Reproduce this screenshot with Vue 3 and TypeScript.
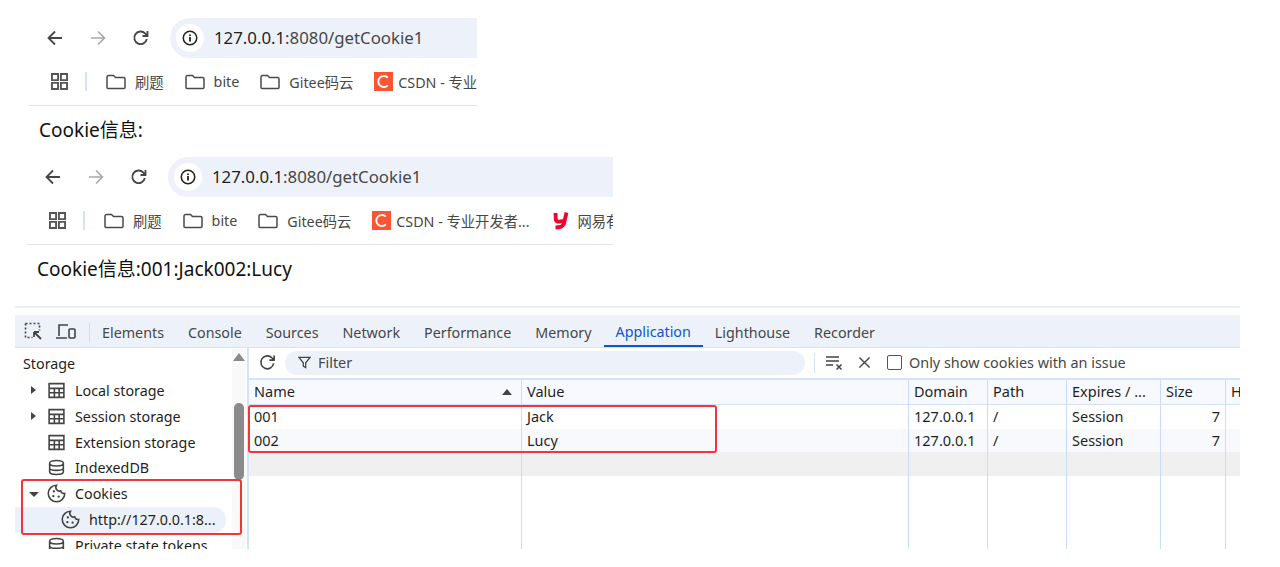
<script setup lang="ts">
interface Bookmark { label: string; kind: 'folder' | 'csdn' | 'y' }
const first: Bookmark[] = [
  { label: '刷题', kind: 'folder' },
  { label: 'bite', kind: 'folder' },
  { label: 'Gitee码云', kind: 'folder' },
  { label: 'CSDN - 专业开发者...', kind: 'csdn' }
]
const second: Bookmark[] = [...first, { label: '网易有道翻译', kind: 'y' }]
const shots = [
  { cls: 'one', marks: first, text: 'Cookie信息:' },
  { cls: 'two', marks: second, text: 'Cookie信息:001:Jack002:Lucy' }
]
const tabs = ['Elements', 'Console', 'Sources', 'Network', 'Performance', 'Memory', 'Application', 'Lighthouse', 'Recorder']
const tree = [
  { label: 'Local storage', arrow: 'right', icon: 'table' },
  { label: 'Session storage', arrow: 'right', icon: 'table' },
  { label: 'Extension storage', arrow: '', icon: 'table' },
  { label: 'IndexedDB', arrow: '', icon: 'db' },
  { label: 'Cookies', arrow: 'down', icon: 'cookie' }
]
const cols = ['Name', 'Value', 'Domain', 'Path', 'Expires / ...', 'Size', 'H']
const rows = [
  ['001', 'Jack', '127.0.0.1', '/', 'Session', '7', ''],
  ['002', 'Lucy', '127.0.0.1', '/', 'Session', '7', '']
]
</script>

<template>
  <div class="page">
    <section v-for="s in shots" :key="s.cls" class="shot" :class="s.cls">
      <div class="nav">
        <svg class="nav-ic" viewBox="0 0 20 20"><path d="M17 10H4M10 3.5 3.5 10l6.5 6.5" fill="none" stroke="#474747" stroke-width="1.8" /></svg>
        <svg class="nav-ic" viewBox="0 0 20 20"><path d="M3 10h13M10 3.500 16.500 10 10 16.500" fill="none" stroke="#a8a8a8" stroke-width="1.600" /></svg>
        <svg class="nav-ic" viewBox="0 0 20 20"><path d="M15.800 11a6.300 6.300 0 1 1-1.500-5.400L16.500 8M16.500 3v5h-5" fill="none" stroke="#474747" stroke-width="1.800" /></svg>
        <div class="url">
          <span class="info"><svg viewBox="0 0 20 20" width="18" height="18"><circle cx="10" cy="10" r="7.500" fill="none" stroke="#222" stroke-width="1.700" /><path d="M10 9v5M10 6v1.800" stroke="#222" stroke-width="2" /></svg></span>
          <span class="addr">127.0.0.1<span class="dim">:8080/getCookie1</span></span>
        </div>
      </div>
      <div class="marks">
        <svg class="apps" viewBox="0 0 18 18"><path d="M1 1h6.500v6.500H1zM10.500 1H17v6.500h-6.500zM1 10.500h6.500V17H1zM10.500 10.500H17V17h-6.500z" fill="none" stroke="#555" stroke-width="2" /></svg>
        <i class="sep"></i>
        <span v-for="m in s.marks" :key="m.label" class="mark">
          <svg v-if="m.kind === 'folder'" class="folder" viewBox="0 0 20 16"><path d="M1 3a1.500 1.500 0 0 1 1.500-1.500h5L9.500 3.500h8A1.500 1.500 0 0 1 19 5v8.500a1 1 0 0 1-1 1H2a1 1 0 0 1-1-1z" fill="none" stroke="#4a4a4a" stroke-width="1.500" /></svg>
          <span v-else-if="m.kind === 'csdn'" class="csdn"><svg viewBox="0 0 19 19" width="19" height="19"><path d="M13.800 5.600A5.200 5.200 0 0 0 9.800 4 5.500 5.500 0 0 0 9.800 15a5.200 5.200 0 0 0 4-1.600" fill="none" stroke="#fff" stroke-width="1.900" /></svg></span>
          <svg v-else class="yd" viewBox="0 0 18 19"><path d="M3.500 2 3.800 8.500Q4 11 7.500 10.600L12 10M14.500 1.500 12 12.500Q11 16.500 3.500 16.500" fill="none" stroke="#f5002b" stroke-width="3.800" /></svg>
          <span class="mark-text">{{ m.label }}</span>
        </span>
      </div>
      <p class="msg">{{ s.text }}</p>
    </section>

    <section class="devtools">
      <div class="tabs">
        <svg class="tool" viewBox="0 0 20 20"><path d="M1.500 1.500h14v7M1.500 1.500v14h7" fill="none" stroke="#444" stroke-width="1.600" stroke-dasharray="2 2" /><path d="M10 10l7 7M10 10h5M10 10v5" fill="none" stroke="#444" stroke-width="1.800" /></svg>
        <svg class="tool" viewBox="0 0 20 20"><path d="M3 14V3h9M0 16h11" fill="none" stroke="#444" stroke-width="1.600" /><rect x="13" y="7" width="6" height="9" rx="1" fill="none" stroke="#444" stroke-width="1.600" /></svg>
        <i class="tsep"></i>
        <span v-for="t in tabs" :key="t" class="tab" :class="{ on: t === 'Application' }">{{ t }}</span>
      </div>
      <div class="body">
        <aside class="side">
          <div class="side-title">Storage</div>
          <div v-for="n in tree" :key="n.label" class="node">
            <span class="arrow" :class="n.arrow"></span>
            <svg v-if="n.icon === 'table'" class="ic" viewBox="0 0 18 18"><path d="M2 2.500h14v13H2zM2 7h14M2 11.200h14M7 7v8.500M11.500 7v8.500" fill="none" stroke="#444" stroke-width="1.500" /></svg>
            <svg v-else-if="n.icon === 'db'" class="ic" viewBox="0 0 18 18"><path d="M2.500 5c0-3.500 13-3.500 13 0v8c0 3.500-13 3.500-13 0zM2.500 5c0 3.500 13 3.500 13 0M2.500 9.500c0 3 13 3 13 0" fill="none" stroke="#444" stroke-width="1.500" /></svg>
            <svg v-else class="ic" viewBox="0 0 18 18"><path d="M9 1.200a7.800 7.800 0 1 0 7.800 7.800 3.400 3.400 0 0 1-3.800-2.500A3.500 3.500 0 0 1 9 1.200z" fill="none" stroke="#444" stroke-width="1.500" /><circle cx="6.500" cy="7" r="1.100" fill="#444" /><circle cx="6" cy="11.500" r="1.100" fill="#444" /><circle cx="11" cy="12" r="1.100" fill="#444" /></svg>
            <span>{{ n.label }}</span>
          </div>
          <div class="node sel">
            <svg class="ic" viewBox="0 0 18 18"><path d="M9 1.200a7.800 7.800 0 1 0 7.800 7.800 3.400 3.400 0 0 1-3.800-2.500A3.500 3.500 0 0 1 9 1.200z" fill="none" stroke="#444" stroke-width="1.500" /><circle cx="6.500" cy="7" r="1.100" fill="#444" /><circle cx="6" cy="11.500" r="1.100" fill="#444" /><circle cx="11" cy="12" r="1.100" fill="#444" /></svg>
            <span>http://127.0.0.1:8...</span>
          </div>
          <div class="node">
            <span class="arrow"></span>
            <svg class="ic" viewBox="0 0 18 18"><path d="M2.500 5c0-3.500 13-3.500 13 0v8c0 3.500-13 3.500-13 0zM2.500 5c0 3.500 13 3.500 13 0M2.500 9.500c0 3 13 3 13 0" fill="none" stroke="#444" stroke-width="1.500" /></svg>
            <span>Private state tokens</span>
          </div>
          <div class="scroll"><i class="up"></i><i class="thumb"></i></div>
          <div class="mark-box side-box"></div>
        </aside>
        <div class="main">
          <div class="bar">
            <svg class="reload" viewBox="0 0 20 20"><path d="M16.500 11a6.800 6.800 0 1 1-1.700-5.800L17 7.500M17 2.500v5h-5" fill="none" stroke="#444" stroke-width="1.700" /></svg>
            <div class="filter">
              <svg viewBox="0 0 14 14" width="13" height="13"><path d="M1 1.500h12L8.300 7.300V12.500L5.700 11V7.300z" fill="none" stroke="#444" stroke-width="1.400" /></svg>
              <span>Filter</span>
            </div>
            <i class="bsep"></i>
            <svg class="clear" viewBox="0 0 18 18"><path d="M0 3h13M0 7h13M0 11h7M10.500 10.500l5 5M15.500 10.500l-5 5" fill="none" stroke="#444" stroke-width="1.500" /></svg>
            <svg class="close" viewBox="0 0 14 14"><path d="M1.500 1.500l11 11M12.500 1.500l-11 11" fill="none" stroke="#444" stroke-width="1.500" /></svg>
            <span class="check"></span>
            <span class="only">Only show cookies with an issue</span>
          </div>
          <div class="grid">
            <div class="row head">
              <div v-for="c in cols" :key="c" class="cell">{{ c }}<span v-if="c === 'Name'" class="sort"></span></div>
            </div>
            <div v-for="(r, i) in rows" :key="i" class="row" :class="{ alt: i === 1 }">
              <div v-for="(v, j) in r" :key="j" class="cell" :class="{ num: j === 5 }">{{ v }}</div>
            </div>
            <div class="row blank"><div v-for="c in cols" :key="c" class="cell"></div></div>
            <div class="row fill"><div v-for="c in cols" :key="c" class="cell"></div></div>
            <div class="mark-box grid-box"></div>
          </div>
        </div>
      </div>
    </section>
  </div>
</template>

<style>
html, body { background: #fff; }
</style>

<style scoped>
.page {
  position: relative;
  width: 1280px;
  height: 567px;
  overflow: hidden;
  background: #fff;
  font-family: "Noto Sans", "Noto Sans CJK SC", sans-serif;
  color: #1f1f1f;
}
.shot { overflow: hidden; box-sizing: border-box; }
.shot.one { margin-left: 29px; width: 448px; height: 148px; padding-top: 18px; }
.shot.two { margin-left: 27px; width: 586px; height: 158px; padding-top: 9px; }
.nav { display: flex; align-items: center; height: 40px; padding-left: 16px; }
.nav-ic { width: 20px; height: 20px; margin-right: 23px; flex: none; }
.url {
  flex: 1;
  height: 40px;
  margin-left: -4px;
  display: flex;
  align-items: center;
  background: #edf2fa;
  border-radius: 20px 0 0 20px;
  padding-left: 6px;
  min-width: 0;
}
.info { width: 28px; height: 28px; border-radius: 50%; background: #fff; display: flex; align-items: center; justify-content: center; flex: none; }
.addr { margin-left: 10px; font-size: 16.800px; line-height: 22px; white-space: nowrap; color: #1f1f1f; }
.dim { color: #474747; }
.marks { display: flex; align-items: center; height: 47px; border-bottom: 1px solid #e2e2e2; padding-left: 22px; white-space: nowrap; overflow: hidden; }
.apps { width: 17px; height: 17px; flex: none; }
.sep { width: 2px; height: 19px; background: #d3e3fd; margin: 0 19px 0 17px; flex: none; }
.mark { display: inline-flex; align-items: center; margin-right: 21px; font-size: 14.300px; color: #474747; flex: none; }
.folder { width: 20px; height: 16px; margin-right: 9px; flex: none; }
.csdn { width: 19px; height: 19px; background: #fc5531; margin-right: 5px; flex: none; display: flex; }
.yd { width: 18px; height: 19px; margin: 0 8px 0 1px; flex: none; }
.msg { margin: 0; font-size: 19px; line-height: 24px; padding: 12px 0 0 10px; color: #111; }

.devtools { width: 1225px; margin-left: 15px; height: 243px; border-top: 2px solid #e9eff9; box-sizing: border-box; overflow: hidden; }
.tabs { margin-top: 7px; height: 32px; background: #edf2fa; border-bottom: 1px solid #d3e3fd; display: flex; align-items: center; padding-left: 9px; font-size: 14.300px; color: #474747; }
.tool { width: 20px; height: 20px; margin: 2px 12px 0 0; flex: none; }
.tsep { width: 1px; height: 19px; background: #d3dce8; margin: 2px 0 0 1px; flex: none; }
.tab { height: 100%; display: flex; align-items: center; padding: 3px 12px 0; box-sizing: border-box; white-space: nowrap; }
.tab.on { color: #0b57d0; border-bottom: 2px solid #0b57d0; }
.body { display: flex; height: 201px; }
.side { position: relative; width: 232px; flex: none; border-right: 2px solid #d3e3fd; font-size: 14.300px; color: #1f1f1f; overflow: hidden; box-sizing: content-box; }
.side-title { height: 22px; line-height: 22px; padding: 4px 0 2.500px 8px; margin-top: 1px; }
.node { height: 25.850px; display: flex; align-items: center; white-space: nowrap; padding-left: 14px; }
.arrow { width: 10px; height: 10px; margin-right: 8px; position: relative; flex: none; }
.arrow.right::before { content: ""; position: absolute; left: 2px; top: 1px; border: 4px solid transparent; border-left: 5px solid #444; border-right: 0; }
.arrow.down::before { content: ""; position: absolute; left: 0; top: 3px; border: 5px solid transparent; border-top: 5px solid #444; border-bottom: 0; }
.ic { width: 19px; height: 19px; margin-right: 9px; flex: none; }
.node.sel { margin-right: 21px; padding-left: 46px; border-radius: 0 13px 13px 0; background: #eaf1fb; }
.scroll { position: absolute; right: 1px; top: 0; width: 14px; height: 100%; background: #f9f9f9; }
.up { position: absolute; left: 1px; top: 5px; border: 6px solid transparent; border-bottom: 8px solid #8a8a8a; border-top: 0; }
.thumb { position: absolute; left: 2px; top: 55px; width: 10px; height: 77px; border-radius: 5px; background: #8b8b8b; }
.mark-box { position: absolute; border: 2px solid #f03636; border-radius: 3px; box-sizing: border-box; }
.side-box { left: 6px; top: 131px; width: 221px; height: 56px; }
.main { flex: 1; min-width: 0; }
.bar { height: 29px; padding: 0 0 1px 9px; border-bottom: 2px solid #d3e3fd; display: flex; align-items: center; font-size: 14.400px; color: #474747; }
.reload { width: 19px; height: 19px; flex: none; }
.filter { width: 520px; height: 24px; margin-left: 8px; background: #edf2fa; border-radius: 12px; display: flex; align-items: center; gap: 7px; padding-left: 13px; flex: none; box-sizing: border-box; margin-right: 9px; }
.bsep { width: 1px; height: 20px; background: #d3e3fd; margin-right: 11px; flex: none; }
.clear { width: 18px; height: 18px; flex: none; margin-right: 14px; }
.close { width: 13px; height: 13px; flex: none; margin-right: 16px; }
.check { width: 13px; height: 13px; border: 1.500px solid #555; border-radius: 2px; margin-right: 7px; flex: none; }
.only { white-space: nowrap; }
.grid { position: relative; font-size: 14.500px; color: #1f1f1f; }
.row { display: grid; grid-template-columns: 273px 387px 79px 79px 94px 65px 1fr; height: 23.500px; }
.cell { border-right: 1px solid #c9dcfb; padding: 0 5px; line-height: 22px; white-space: nowrap; overflow: hidden; position: relative; box-sizing: border-box; }
.cell:last-child { border-right: 0; }
.head { height: 25px; background: #f8f9ff; border-bottom: 1px solid #d3e3fd; box-sizing: border-box; }
.head .cell { line-height: 23px; }
.alt { background: #f8f9fd; }
.num { text-align: right; padding-right: 5px; }
.blank { background: #f0f0f0; }
.fill { height: 80px; }
.sort { position: absolute; right: 9px; top: 9px; border: 5px solid transparent; border-bottom: 6px solid #444; border-top: 0; }
.grid-box { left: -1px; top: 25px; width: 469px; height: 48px; }
</style>
